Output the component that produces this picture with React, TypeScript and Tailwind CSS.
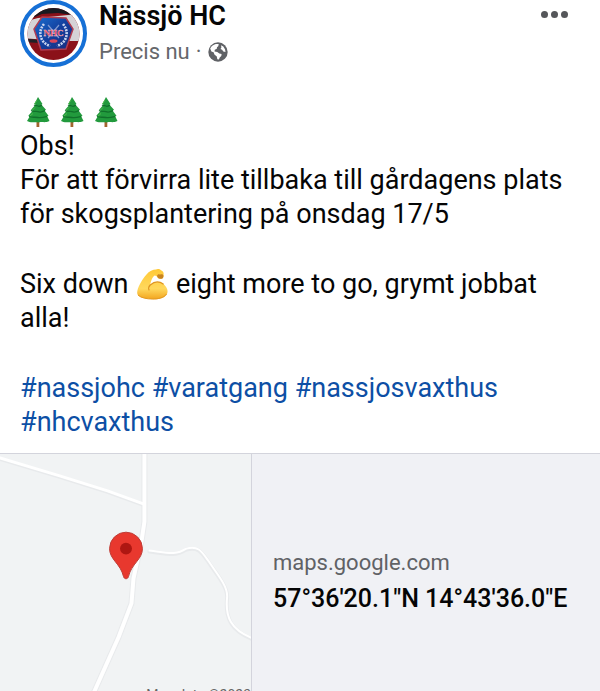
import React from 'react';

const TREE_COUNT = 3;

const HASHTAGS = ['nassjohc', 'varatgang', 'nassjosvaxthus', 'nhcvaxthus'];

const Avatar: React.FC = () => (
  <svg viewBox="0 0 67 67" className="size-[67px] shrink-0" role="img" aria-label="Nässjö HC">
    <defs>
      <clipPath id="avatar-clip">
        <circle cx="33.500" cy="34" r="26" />
      </clipPath>
      <linearGradient id="badge" x1="0" y1="0" x2="1" y2="1">
        <stop offset="0" stopColor="#1b6fd0" />
        <stop offset="0.500" stopColor="#123f9e" />
        <stop offset="1" stopColor="#1a2c7c" />
      </linearGradient>
    </defs>
    <circle cx="33.500" cy="33.500" r="31.500" fill="#fff" stroke="#1670d6" strokeWidth="4" />
    <g clipPath="url(#avatar-clip)">
      <rect width="67" height="67" fill="#8b1119" />
      <path d="M0 0h67v17L38 13 22 14 0 23z" fill="#191a20" />
      <path d="M0 23l18-5 30-3 19-2v28H44L0 38z" fill="#d5d3d6" />
      <path d="M0 38l20 2v3L0 42z" fill="#202126" />
      <path d="M22 17L46 18 53 29 46 49 21 50 14 29z" fill="url(#badge)" stroke="#b13c50" strokeWidth="1.500" />
      <path d="M24 24c-6 7-5 18 6 22M43 24c6 7 5 18-6 22" fill="none" stroke="#c9d3ee" strokeWidth="2.600" strokeDasharray="2 1" />
      <path d="M28 25l11 13M39 25L28 38" stroke="#7f9ad2" strokeWidth="1.200" />
      <ellipse cx="33.500" cy="41" rx="4" ry="1.800" fill="#d8475a" />
      <text x="33.500" y="36" textAnchor="middle" fontFamily="Liberation Serif, serif" fontWeight="700" fontSize="9" fill="#ef3a48" stroke="#f7c7ca" strokeWidth="0.300">
        NHC
      </text>
    </g>
  </svg>
);

const GlobeIcon: React.FC = () => (
  <svg viewBox="0 0 20 20" className="size-5" role="img" aria-label="Offentligt">
    <circle cx="10" cy="10" r="9.700" fill="#606266" />
    <path d="M2.200 6.500c1-2 2.300-3.200 4.300-4 1.500-.500 3-.500 4.300-.300l-.600 2-1.200 1-.200 1.600-2 1-.300 1.700 2.800.400 2 1.500 2.300.500-.300 2.200-1.600 1.300-.800 2.200-1.600-.400-.500-2.700-2.400-2-.800-2.300-2.200-.800z" fill="#fff" />
    <path d="M13 3.200l2.300 1.300 1.800 3 .400 2.500-2.200-.600-1.200-1.600-1.600-.800.900-1.600z" fill="#fff" />
  </svg>
);

const TreeIcon: React.FC = () => (
  <svg viewBox="0 0 34 34" className="inline-block size-[34px] align-top" role="img" aria-label="Gran">
    <path d="M16.500 25h2.800v7h-2.800z" fill="#a2642f" />
    <path d="M18 2l4.500 7-1 .800 4.500 5-1.300 1 3.800 5-1.200.800 2.200 4.400c-3.500 2-7 .500-11 1.500-4-1-8 .700-11.500-1.500l2.700-4.600-1.400-.700 4.400-5-1.600-.900 4.400-5-1.200-.800z" fill="#229a3d" />
    <path d="M14 10c2 1.200 3 .200 4 1s2.500 0 4-.700M11 15.500c3 1.800 5 .300 7 1.200s5 0 7-1M9 21.500c3 1.400 6 .300 9 1s6-.200 9-1" fill="none" stroke="#11702b" strokeWidth="1.300" />
    <path d="M17 5l-2.500 4M15 12.500l-2.500 2.500M13 18.500L10 21" fill="none" stroke="#51b84d" strokeWidth="1" />
  </svg>
);

const BicepsIcon: React.FC = () => (
  <svg viewBox="0 0 34 34" className="inline-block size-[34px] align-top" role="img" aria-label="Stark">
    <defs>
      <linearGradient id="skin" x1="0" y1="0" x2="0" y2="1">
        <stop offset="0" stopColor="#ffc936" />
        <stop offset="0.650" stopColor="#ffd85d" />
        <stop offset="1" stopColor="#f2a51f" />
      </linearGradient>
    </defs>
    <path d="M11.500 7.500C14 4 18 2.500 21 2.500c1.500-1 4-.500 5 .800 2 .700 3 2.500 2.600 4.500.400 2-.800 4-2.600 4-2 .200-3.500-.800-4-2.300L20 8.500c-2 .500-4 4.500-4.800 9.500C19 14.500 25 14 28.500 17c3.500 3 5 7 3.500 10-2 4-8 5.500-14 5.200C11 32 5 31 2.500 27.500 1 24 5 15 11.500 7.500z" fill="url(#skin)" />
    <path d="M15.200 18c-1.500 1.500-2 3-1.200 5M15.200 18c4-3.500 9-4 13-1" fill="none" stroke="#df9521" strokeWidth="1.200" strokeLinecap="round" />
    <path d="M22 9c.500-1.800 1.800-2 3-1.300 1.500-.800 3-.300 3.500 1 0 2.600-1.500 3.200-3 3-1.800.200-3-.900-3.500-2.700z" fill="#c98420" />
    <path d="M3 28c3 3 9 4 14.500 4s11.500-1 14-5" fill="none" stroke="#e49a24" strokeWidth="1" />
  </svg>
);

const MapPreview: React.FC = () => (
  <div className="relative overflow-hidden border-r border-[#d3d4dc] bg-[#f1f3f4]">
    <svg viewBox="0 0 252 238" className="block w-full" role="img" aria-label="Karta">
      <g fill="none" strokeLinecap="round" strokeLinejoin="round">
        <g stroke="#e8eaec">
          <path d="M0 5L60 23 108 38 144 51" strokeWidth="4" />
          <path d="M145 -4V68L142 88 134 125 132 150 119 184 94 240" strokeWidth="6" />
          <path d="M150 98C168 100 176 103 187 96 199 93 202 98 209 108 219 123 229 134 228 145 226 164 231 178 256 187" strokeWidth="4" />
        </g>
        <g stroke="#fff">
          <path d="M0 4L60 22 108 37 144 50" strokeWidth="3" />
          <path d="M145 -4V68L142 88 134 125 132 150 119 184 94 240" strokeWidth="4" />
          <path d="M150 97C168 99 176 102 187 95 199 92 202 97 209 107 219 122 229 133 228 144 226 163 231 177 256 186" strokeWidth="2" />
        </g>
      </g>
      <path d="M126.500 78.500a16.500 16.500 0 0 1 16.500 16.500c0 11-11 15-14 28-.700 3-4.300 3-5 0-3-13-14-17-14-28a16.500 16.500 0 0 1 16.500-16.500z" fill="#e8382e" stroke="#bd3b35" strokeWidth="1" />
      <circle cx="126.500" cy="95" r="6" fill="#ae1712" />
    </svg>
    <small className="absolute right-0 -bottom-3 font-['Roboto','Liberation_Sans',sans-serif] text-sm leading-4 text-[#666]">
      Map data ©2023
    </small>
  </div>
);

const App: React.FC = () => {
  return (
    <article className="bg-white font-['Roboto','Liberation_Sans',sans-serif] text-[#050505]">
      <header className="flex items-start gap-3 pr-8 pl-5">
        <Avatar />
        <div className="flex-1">
          <h1 className="text-[27px] leading-8 font-semibold">Nässjö HC</h1>
          <p className="flex items-center gap-1.5 pt-1 text-[22px] leading-8 text-[#65676b]">
            <span>Precis nu</span>
            <span>·</span>
            <GlobeIcon />
          </p>
        </div>
        <button type="button" aria-label="Fler alternativ" className="flex gap-[3px] pt-[11px]">
          <span className="size-[7px] rounded-full bg-[#55575a]" />
          <span className="size-[7px] rounded-full bg-[#55575a]" />
          <span className="size-[7px] rounded-full bg-[#55575a]" />
        </button>
      </header>

      <div className="px-5 pt-[27px] pb-3.5 text-[27px] leading-[34px]">
        <div className="flex">
          {Array.from({ length: TREE_COUNT }, (_, i) => (
            <TreeIcon key={i} />
          ))}
        </div>
        <p>Obs!</p>
        <p>För att förvirra lite tillbaka till gårdagens plats för skogsplantering på onsdag 17/5</p>
        <p className="pt-9">
          Six down <BicepsIcon /> eight more to go, grymt jobbat alla!
        </p>
        <p className="pt-9 text-[#0d4fa5]">
          {HASHTAGS.map((tag) => (
            <React.Fragment key={tag}>
              <a href={`#${tag}`}>#{tag}</a>{' '}
            </React.Fragment>
          ))}
        </p>
      </div>

      <section className="grid grid-cols-[42%_1fr] border-t border-[#d3d4dc] bg-[#f0f1f5]">
        <MapPreview />
        <div className="flex flex-col justify-center pt-4 pl-[21px]">
          <p className="text-[22px] leading-9 text-[#606266]">maps.google.com</p>
          <a href="#karta" className="text-[25px] leading-9 font-medium whitespace-nowrap">
            57°36'20.1"N 14°43'36.0"E
          </a>
        </div>
      </section>
    </article>
  );
};

export default App;
